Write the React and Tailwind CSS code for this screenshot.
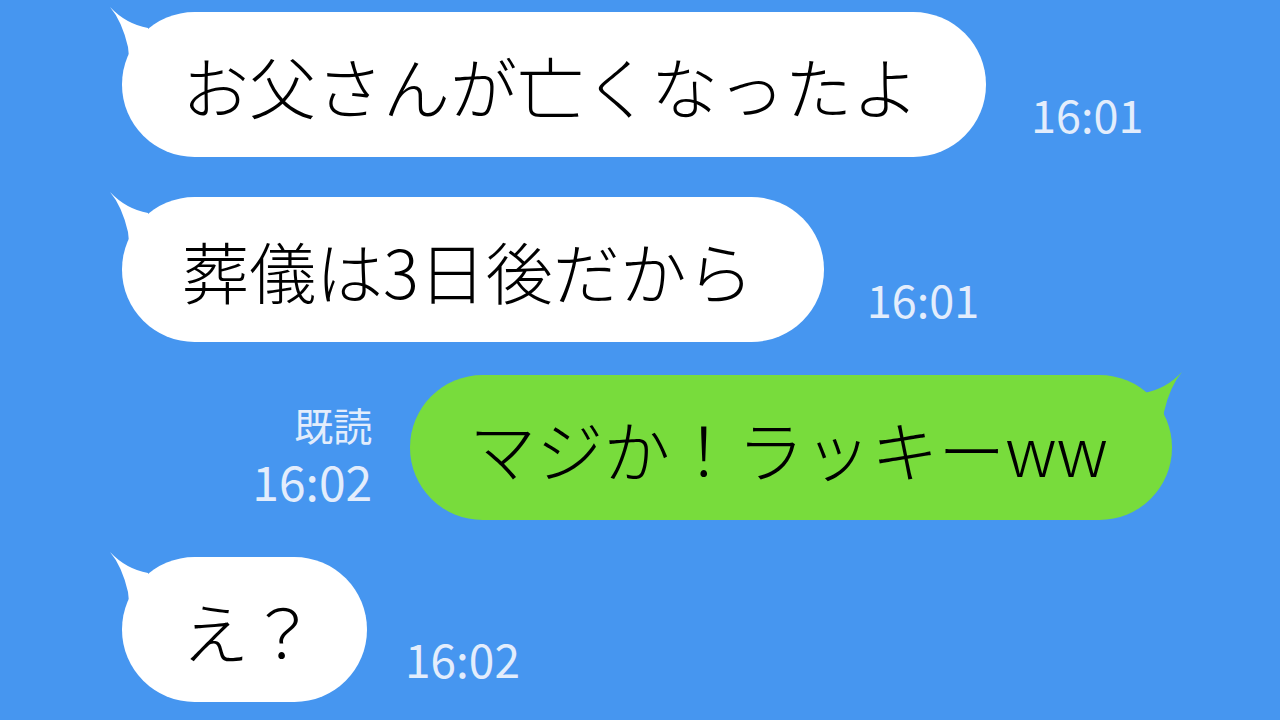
function Tail({ color, flip }) {
  return (
    <svg
      width="40"
      height="60"
      viewBox="0 0 40 60"
      className={
        flip
          ? "absolute -right-[10px] -top-[3px] -scale-x-100"
          : "absolute -left-[12px] -top-[5px]"
      }
    >
      <path d="M0 0 Q16 17 38 21 L38 60 L20 60 L18 40 Q12 14 0 0 Z" fill={color} />
    </svg>
  );
}

function Bubble({ text, green, pr }) {
  return (
    <div
      className={
        green
          ? "relative flex h-[145px] items-center rounded-full bg-[#78dc3c] pl-[59px]"
          : "relative flex h-[145px] items-center rounded-full bg-white pl-[60px]"
      }
      style={{ paddingRight: pr }}
    >
      <Tail color={green ? "#78dc3c" : "#ffffff"} flip={green} />
      <span className="relative whitespace-nowrap text-[67px] font-light leading-none text-black">
        {text}
      </span>
    </div>
  );
}

function Received({ text, time, big, gap, pr, className }) {
  return (
    <div className={"flex items-end pl-[122px] " + className}>
      <Bubble text={text} pr={pr} />
      <span
        className={
          (big ? "text-[46px] " : "text-[45px] ") + "mb-[21px] leading-none text-[#e3edfc]"
        }
        style={{ marginLeft: gap }}
      >
        {time}
      </span>
    </div>
  );
}

function App() {
  return (
    <div
      className="flex h-[720px] w-[1280px] flex-col overflow-hidden bg-[#4696f0]"
      style={{ fontFamily: '"Noto Sans CJK JP", "Noto Sans", sans-serif' }}
    >
      <Received className="mt-[12px]" text="お父さんが亡くなったよ" time="16:01" gap={45} pr={67} />
      <Received className="mt-[40px]" text="葬儀は3日後だから" time="16:01" gap={43} pr={70} />

      <div className="mt-[33px] flex items-end justify-end pr-[108px]">
        <div className="mb-[16px] mr-[38px] flex flex-col items-end gap-[12px] text-[#e3edfc]">
          <span className="text-[39px] leading-none">既読</span>
          <span className="text-[48px] leading-none">16:02</span>
        </div>
        <Bubble text="マジか！ラッキーww" green pr={64} />
      </div>

      <Received className="mt-[37px]" text="え？" time="16:02" big gap={38} pr={51} />
    </div>
  );
}

export default App;
